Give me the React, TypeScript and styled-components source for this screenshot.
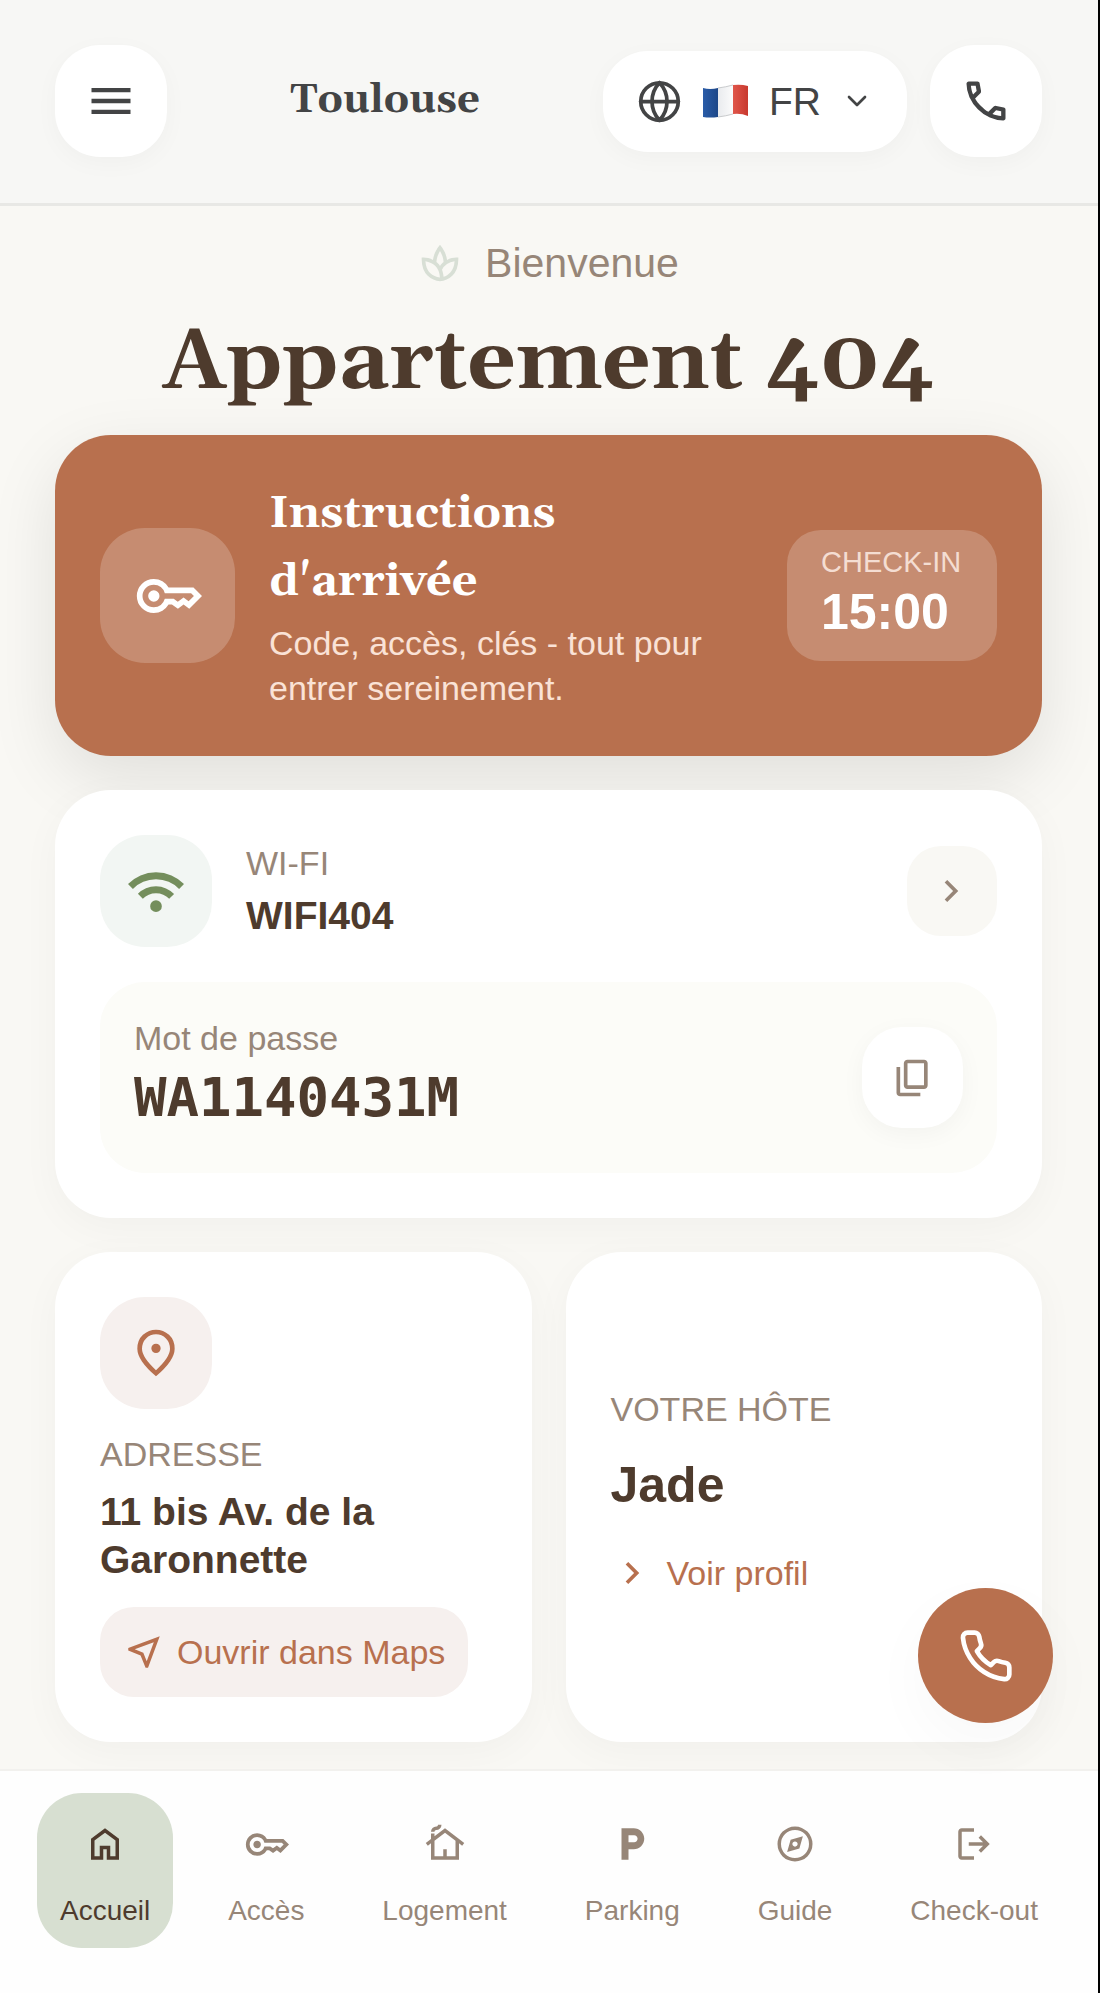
import React from "react";
import styled, { createGlobalStyle } from "styled-components";
import { ChevronDown, Globe } from "lucide-react";
import { FiPhone } from "react-icons/fi";
import { MdLocalParking } from "react-icons/md";

const colors = {
  page: "#f9f8f4",
  dark: "#4e3b2d",
  muted: "#978678",
  accent: "#b8704e",
  accentSoft: "#f6f0ee",
  ink: "#434445",
};

const serif = `Georgia, Gelasio, "DejaVu Serif", serif`;

const GlobalStyle = createGlobalStyle`
  * {
    box-sizing: border-box;
  }

  body {
    margin: 0;
    font-family: "Liberation Sans", Arial, sans-serif;
    color: ${colors.dark};
    background: ${colors.page};
  }

  h1, h2, p {
    margin: 0;
  }

  button, select {
    font: inherit;
    color: inherit;
    border: 0;
    padding: 0;
    background: none;
    cursor: pointer;
  }

  a {
    color: inherit;
    text-decoration: none;
  }

  svg {
    display: block;
    flex-shrink: 0;
  }
`;

const paths = {
  menu: "M120-240v-80h720v80H120Zm0-200v-80h720v80H120Zm0-200v-80h720v80H120Z",
  call: "M798-120q-125 0-247-54.5T329-329Q229-429 174.5-551T120-798q0-18 12-30t30-12h162q14 0 25 9.5t13 22.5l26 140q2 16-1 27t-11 19l-97 98q20 37 47.5 71.5T387-386q31 31 65 57.5t72 48.5l94-94q9-9 23.5-13.5T670-390l138 28q14 4 23 14.5t9 23.5v162q0 18-12 30t-30 12ZM241-600l66-66-17-94h-89q5 41 14 81t26 79Zm358 358q39 17 79.5 27t81.5 13v-88l-94-19-67 67Z",
  spa: "M480-80q-73-9-145-39.5T206.5-207Q150-264 115-351T80-560v-40h40q51 0 105 13t101 39q12-86 54.5-176.5T480-880q57 65 99.5 155.5T634-548q47-26 101-39t105-13h40v40q0 122-35 209t-91.5 144q-56.5 57-128 87.5T480-80Zm-2-82q-11-166-98.5-251T162-518q11 171 101.5 255T478-162Zm2-254q15-22 36.5-45.5T558-502q-2-57-22.5-119T480-742q-35 59-55.5 121T402-502q20 17 42 40.5t36 45.5Zm78 236q37-12 77-35t74.5-62.5q34.5-39.5 59-98.5T798-518q-94 14-165 62.5T524-332q12 32 20.5 70t13.5 82Z",
  key: "M280-400q-33 0-56.5-23.5T200-480q0-33 23.5-56.5T280-560q33 0 56.5 23.5T360-480q0 33-23.5 56.5T280-400Zm0 160q-100 0-170-70T40-480q0-100 70-170t170-70q67 0 121.5 33t86.5 87h352l120 120-180 180-80-60-80 60-85-60h-47q-32 54-86.5 87T280-240Zm0-80q56 0 98.5-34t56.5-86h125l58 41 82-61 71 55 75-75-40-40H435q-14-52-56.5-86T280-640q-66 0-113 47t-47 113q0 66 47 113t113 47Z",
  wifi: "M480-120q-42 0-71-29t-29-71q0-42 29-71t71-29q42 0 71 29t29 71q0 42-29 71t-71 29ZM254-346l-84-86q59-59 138.5-93.5T480-560q92 0 171.5 35T790-430l-84 84q-44-44-102-69t-124-25q-66 0-124 25t-102 69ZM84-516 0-600q92-94 215-147t265-53q142 0 265 53t215 147l-84 84q-77-77-178.5-120.5T480-680q-116 0-217.5 43.5T84-516Z",
  chevron: "M504-480 320-664l56-56 240 240-240 240-56-56 184-184Z",
  copy: "M360-240q-33 0-56.5-23.5T280-320v-480q0-33 23.5-56.5T360-880h360q33 0 56.5 23.5T800-800v480q0 33-23.5 56.5T720-240H360Zm0-80h360v-480H360v480ZM200-80q-33 0-56.5-23.5T120-160v-560h80v560h440v80H200Z",
  pin: "M480-480q33 0 56.5-23.5T560-560q0-33-23.5-56.5T480-640q-33 0-56.5 23.5T400-560q0 33 23.5 56.5T480-480Zm0 294q122-112 181-203.5T720-552q0-109-69.5-178.5T480-800q-101 0-170.5 69.5T240-552q0 71 59 162.5T480-186Zm0 106Q319-217 239.5-334.5T160-552q0-150 96.5-239T480-880q127 0 223.5 89T800-552q0 100-79.5 217.5T480-80Z",
  nearMe:
    "M516-120 402-402 120-516v-56l720-268-268 720h-56Zm26-148 162-436-436 162 196 78 78 196Z",
  home: "M240-200h120v-240h240v240h120v-360L480-740 240-560v360Zm-80 80v-480l320-240 320 240v480H520v-240h-80v240H160Z",
  cottage:
    "M160-120v-375l-72 55-48-64 120-92v-124h80v63l240-183 440 336-48 63-72-54v375H160Zm80-80h200v-160h80v160h200v-356L480-739 240-556v356Zm-80-560q0-50 35-85t85-35q17 0 28.5-11.5T320-920h80q0 50-35 85t-85 35q-17 0-28.5 11.5T240-760h-80Z",
  explore:
    "m300-300 280-80 80-280-280 80-80 280Zm180-120q-25 0-42.5-17.5T420-480q0-25 17.5-42.5T480-540q25 0 42.5 17.5T540-480q0 25-17.5 42.5T480-420Zm0 340q-83 0-156-31.5T197-197q-54-54-85.5-127T80-480q0-83 31.5-156T197-763q54-54 127-85.5T480-880q83 0 156 31.5T763-763q54 54 85.5 127T880-480q0 83-31.5 156T763-197q-54 54-127 85.5T480-80Zm0-80q134 0 227-93t93-227q0-134-93-227t-227-93q-134 0-227 93t-93 227q0 134 93 227t227 93Z",
  logout:
    "M200-120q-33 0-56.5-23.5T120-200v-560q0-33 23.5-56.5T200-840h280v80H200v560h280v80H200Zm440-160-55-58 102-102H360v-80h327L585-622l55-58 200 200-200 200Z",
};

type IconProps = { name: keyof typeof paths; size: number };

const Icon = ({ name, size }: IconProps) => (
  <svg
    width={size}
    height={size}
    viewBox="0 -960 960 960"
    fill="currentColor"
    fillRule="evenodd"
    aria-hidden="true"
  >
    <path d={paths[name]} />
  </svg>
);

const Flag = () => (
  <svg width="47" height="34" viewBox="0 0 47 34" aria-hidden="true">
    <defs>
      <linearGradient id="blue" x1="0" x2="1">
        <stop offset="0" stopColor="#2a5ca8" />
        <stop offset="1" stopColor="#1d4788" />
      </linearGradient>
      <linearGradient id="white" x1="0" x2="1">
        <stop offset="0" stopColor="#e9ebee" />
        <stop offset="1" stopColor="#fbfbfb" />
      </linearGradient>
      <linearGradient id="red" x1="0" x2="1">
        <stop offset="0" stopColor="#e0564a" />
        <stop offset="1" stopColor="#c8392f" />
      </linearGradient>
    </defs>
    <path d="M1 4q7 2 15 0v29q-8 1-15 0z" fill="url(#blue)" />
    <path d="M16 4q8-1 15-3v29q-7 2-15 3z" fill="url(#white)" />
    <path d="M31 1q8-1 15 1v30q-7-3-15-2z" fill="url(#red)" />
    <path d="M16 4q8-1 15-3M16 33q8-1 15-3" fill="none" stroke="#c9cbcd" />
  </svg>
);

const StyledPage = styled.div`
  display: flex;
  flex-direction: column;
  min-height: 100vh;
  border-right: 2px solid #000;
  background: ${colors.page};
`;

const StyledHeader = styled.header`
  display: flex;
  align-items: center;
  justify-content: space-between;
  padding: 45px 56px 46px 55px;
  border-bottom: 3px solid #e8e8e5;
  background: #f7f7f5;
  color: ${colors.ink};
`;

const StyledCity = styled.p`
  font-family: ${serif};
  font-size: 40px;
  font-weight: bold;
  line-height: 50px;
`;

const StyledHeaderActions = styled.div`
  display: flex;
  align-items: center;
  gap: 23px;
`;

const StyledHeaderButton = styled.button`
  display: grid;
  place-items: center;
  width: 112px;
  height: 112px;
  border-radius: 45px;
  background: #fff;
  box-shadow: 0 6px 24px rgba(0, 0, 0, 0.03);
`;

const StyledLanguage = styled.label`
  display: flex;
  align-items: center;
  gap: 20px;
  height: 101px;
  padding: 0 34px;
  border-radius: 45px;
  background: #fff;
  box-shadow: 0 6px 24px rgba(0, 0, 0, 0.03);

  select {
    appearance: none;
    font-size: 39px;
    line-height: 45px;
  }
`;

const StyledMain = styled.main`
  padding: 34px 56px 27px 55px;
`;

const StyledWelcome = styled.p`
  display: flex;
  align-items: center;
  justify-content: center;
  gap: 23px;
  font-size: 41px;
  line-height: 46px;
  color: ${colors.muted};

  svg {
    color: #d8dfd5;
  }
`;

const StyledTitle = styled.h1`
  margin: 23px 0 17px;
  text-align: center;
  font-family: ${serif};
  font-size: 85px;
  line-height: 109px;
`;

const StyledArrival = styled.a`
  display: flex;
  align-items: center;
  gap: 34px;
  padding: 45px;
  border-radius: 56px;
  background: ${colors.accent};
  color: #fff;
  box-shadow: 0 22px 68px rgba(0, 0, 0, 0.1);
`;

const StyledArrivalIcon = styled.span`
  display: grid;
  flex-shrink: 0;
  place-items: center;
  width: 135px;
  height: 135px;
  border-radius: 45px;
  background: rgba(255, 255, 255, 0.2);
`;

const StyledArrivalText = styled.div`
  flex: 1;

  h2 {
    margin-bottom: 5px;
    font-family: ${serif};
    font-size: 45px;
    line-height: 68px;
  }

  p {
    font-size: 34px;
    line-height: 45px;
    color: #fae2d6;
  }
`;

const StyledCheckIn = styled.div`
  min-width: 210px;
  padding: 15px 34px;
  border-radius: 34px;
  background: rgba(255, 255, 255, 0.2);

  p {
    font-size: 29px;
    line-height: 34px;
    color: #f4ddd2;
  }

  strong {
    display: block;
    font-size: 50px;
    line-height: 67px;
  }
`;

const StyledCard = styled.section`
  padding: 45px;
  border-radius: 56px;
  background: #fff;
  box-shadow: 0 10px 40px rgba(0, 0, 0, 0.035);
`;

const StyledWifiCard = styled(StyledCard)`
  margin: 34px 0;
`;

const StyledRow = styled.div`
  display: flex;
  align-items: center;
  gap: 34px;
`;

const StyledGrow = styled.div`
  flex: 1;
`;

const StyledTile = styled.div<{ $bg: string; $color: string }>`
  display: grid;
  place-items: center;
  width: 112px;
  height: 112px;
  border-radius: 45px;
  background: ${({ $bg }) => $bg};
  color: ${({ $color }) => $color};
`;

const StyledLabel = styled.p`
  font-size: 34px;
  line-height: 45px;
  color: ${colors.muted};
`;

const StyledNetwork = styled.p`
  margin-top: 4px;
  font-size: 39px;
  font-weight: bold;
  line-height: 52px;
`;

const StyledMore = styled.button`
  display: grid;
  place-items: center;
  width: 90px;
  height: 90px;
  border-radius: 34px;
  background: ${colors.page};
  color: ${colors.muted};
`;

const StyledPassword = styled(StyledRow)`
  margin-top: 35px;
  padding: 34px;
  border-radius: 45px;
  background: #fcfcf8;
`;

const StyledCode = styled.p`
  margin: 2px 0 6px;
  font-family: "DejaVu Sans Mono", monospace;
  font-size: 54px;
  font-weight: bold;
  line-height: 70px;
`;

const StyledCopy = styled.button`
  display: grid;
  place-items: center;
  width: 101px;
  height: 101px;
  border-radius: 40px;
  background: #fff;
  color: ${colors.muted};
  box-shadow: 0 6px 24px rgba(0, 0, 0, 0.04);
`;

const StyledGrid = styled.div`
  display: grid;
  grid-template-columns: 1fr 1fr;
  gap: 34px;
`;

const StyledAddress = styled.p`
  margin: 11px 0 23px;
  font-size: 39px;
  font-weight: bold;
  line-height: 48px;
`;

const StyledAddressLabel = styled(StyledLabel)`
  margin-top: 23px;
`;

const StyledMapsLink = styled.a`
  display: inline-flex;
  align-items: center;
  gap: 12px;
  height: 90px;
  padding: 0 23px;
  border-radius: 34px;
  background: ${colors.accentSoft};
  color: ${colors.accent};
  font-size: 34px;
  white-space: nowrap;
  vertical-align: top;
`;

const StyledHostCard = styled(StyledCard)`
  display: flex;
  flex-direction: column;
  align-items: flex-start;
  justify-content: center;
  gap: 17px;
`;

const StyledHost = styled.p`
  font-size: 50px;
  font-weight: bold;
  line-height: 73px;
`;

const StyledProfileLink = styled.a`
  display: flex;
  align-items: center;
  gap: 12px;
  height: 68px;
  color: ${colors.accent};
  font-size: 34px;
`;

const StyledCallButton = styled.button`
  position: fixed;
  right: 47px;
  bottom: 270px;
  z-index: 2;
  display: grid;
  place-items: center;
  width: 135px;
  height: 135px;
  border-radius: 50%;
  background: ${colors.accent};
  color: #fff;
  box-shadow: 0 22px 60px rgba(0, 0, 0, 0.03);
`;

const StyledNav = styled.nav`
  position: sticky;
  bottom: 0;
  display: flex;
  justify-content: space-between;
  margin-top: auto;
  padding: 22px 37px 45px;
  border-top: 2px solid #f2f1ee;
  background: #fefefe;
`;

const StyledNavItem = styled.a<{ $active?: boolean }>`
  display: flex;
  flex-direction: column;
  align-items: center;
  gap: 17px;
  padding: 22px 23px 17px;
  border-radius: 45px;
  background: ${({ $active }) => ($active ? "#d7dfd1" : "transparent")};
  color: ${({ $active }) => ($active ? colors.dark : colors.muted)};
  font-size: 28px;
  line-height: 41px;
`;

const StyledNavIcon = styled.span`
  display: grid;
  place-items: center;
  height: 58px;
`;

const navItems = [
  { label: "Accueil", icon: <Icon name="home" size={42} />, active: true },
  { label: "Accès", icon: <Icon name="key" size={45} /> },
  { label: "Logement", icon: <Icon name="cottage" size={42} /> },
  { label: "Parking", icon: <MdLocalParking size={42} /> },
  { label: "Guide", icon: <Icon name="explore" size={42} /> },
  { label: "Check-out", icon: <Icon name="logout" size={42} /> },
];

const App = () => {
  return (
    <StyledPage>
      <GlobalStyle />
      <StyledHeader>
        <StyledHeaderButton type="button" aria-label="Menu">
          <Icon name="menu" size={52} />
        </StyledHeaderButton>
        <StyledCity>Toulouse</StyledCity>
        <StyledHeaderActions>
          <StyledLanguage>
            <Globe size={45} />
            <Flag />
            <select aria-label="Langue" defaultValue="fr">
              <option value="fr">FR</option>
            </select>
            <ChevronDown size={32} />
          </StyledLanguage>
          <StyledHeaderButton type="button" aria-label="Appeler">
            <Icon name="call" size={52} />
          </StyledHeaderButton>
        </StyledHeaderActions>
      </StyledHeader>

      <StyledMain>
        <StyledWelcome>
          <Icon name="spa" size={44} />
          Bienvenue
        </StyledWelcome>
        <StyledTitle>Appartement 404</StyledTitle>

        <StyledArrival href="#acces">
          <StyledArrivalIcon>
            <Icon name="key" size={68} />
          </StyledArrivalIcon>
          <StyledArrivalText>
            <h2>Instructions d'arrivée</h2>
            <p>Code, accès, clés - tout pour entrer sereinement.</p>
          </StyledArrivalText>
          <StyledCheckIn>
            <p>CHECK-IN</p>
            <strong>15:00</strong>
          </StyledCheckIn>
        </StyledArrival>

        <StyledWifiCard>
          <StyledRow>
            <StyledTile $bg="#f2f6f3" $color="#748e5c">
              <Icon name="wifi" size={56} />
            </StyledTile>
            <StyledGrow>
              <StyledLabel>WI-FI</StyledLabel>
              <StyledNetwork>WIFI404</StyledNetwork>
            </StyledGrow>
            <StyledMore type="button" aria-label="Détails du Wi-Fi">
              <Icon name="chevron" size={44} />
            </StyledMore>
          </StyledRow>
          <StyledPassword>
            <StyledGrow>
              <StyledLabel>Mot de passe</StyledLabel>
              <StyledCode>WA1140431M</StyledCode>
            </StyledGrow>
            <StyledCopy type="button" aria-label="Copier le mot de passe">
              <Icon name="copy" size={44} />
            </StyledCopy>
          </StyledPassword>
        </StyledWifiCard>

        <StyledGrid>
          <StyledCard>
            <StyledTile $bg={colors.accentSoft} $color={colors.accent}>
              <Icon name="pin" size={56} />
            </StyledTile>
            <StyledAddressLabel>ADRESSE</StyledAddressLabel>
            <StyledAddress>11 bis Av. de la Garonnette</StyledAddress>
            <StyledMapsLink href="#maps">
              <Icon name="nearMe" size={42} />
              Ouvrir dans Maps
            </StyledMapsLink>
          </StyledCard>
          <StyledHostCard>
            <StyledLabel>VOTRE HÔTE</StyledLabel>
            <StyledHost>Jade</StyledHost>
            <StyledProfileLink href="#profil">
              <Icon name="chevron" size={44} />
              Voir profil
            </StyledProfileLink>
          </StyledHostCard>
        </StyledGrid>
      </StyledMain>

      <StyledCallButton type="button" aria-label="Appeler l'hôte">
        <FiPhone size={56} />
      </StyledCallButton>

      <StyledNav>
        {navItems.map(({ label, icon, active }) => (
          <StyledNavItem key={label} href={`#${label}`} $active={active}>
            <StyledNavIcon>{icon}</StyledNavIcon>
            {label}
          </StyledNavItem>
        ))}
      </StyledNav>
    </StyledPage>
  );
};

export default App;
